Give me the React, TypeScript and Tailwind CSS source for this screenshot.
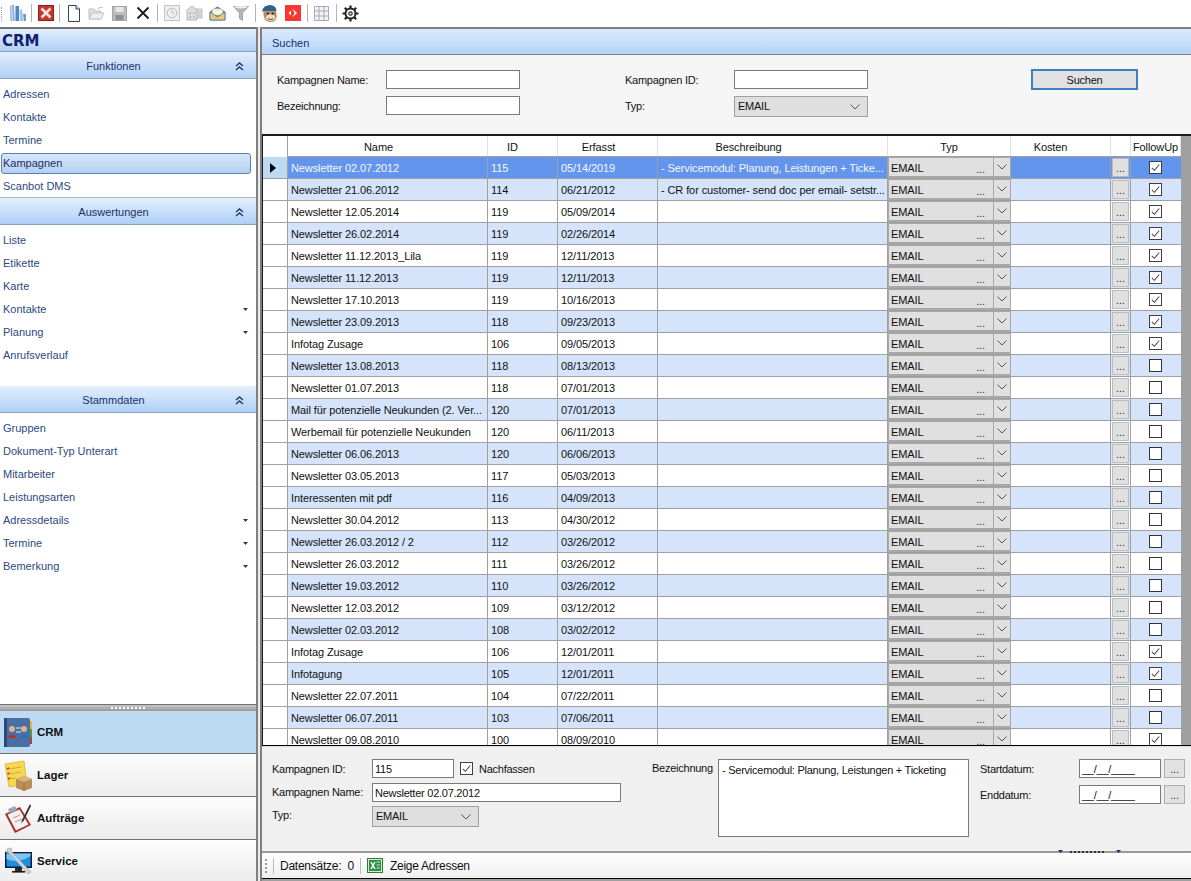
import type { ReactNode } from 'react'

const font = 'font-["Liberation_Sans",Arial,sans-serif]'

type Row = { name: string; id: number; date: string; desc?: string; check: boolean }

const rows: Row[] = [
  { name: 'Newsletter 02.07.2012', id: 115, date: '05/14/2019', desc: '- Servicemodul: Planung, Leistungen + Ticke...', check: true },
  { name: 'Newsletter 21.06.2012', id: 114, date: '06/21/2012', desc: '- CR for customer- send doc per email- setstr...', check: true },
  { name: 'Newsletter 12.05.2014', id: 119, date: '05/09/2014', check: true },
  { name: 'Newsletter 26.02.2014', id: 119, date: '02/26/2014', check: true },
  { name: 'Newsletter 11.12.2013_Lila', id: 119, date: '12/11/2013', check: true },
  { name: 'Newsletter 11.12.2013', id: 119, date: '12/11/2013', check: true },
  { name: 'Newsletter 17.10.2013', id: 119, date: '10/16/2013', check: true },
  { name: 'Newsletter 23.09.2013', id: 118, date: '09/23/2013', check: true },
  { name: 'Infotag Zusage', id: 106, date: '09/05/2013', check: true },
  { name: 'Newsletter 13.08.2013', id: 118, date: '08/13/2013', check: false },
  { name: 'Newsletter 01.07.2013', id: 118, date: '07/01/2013', check: false },
  { name: 'Mail für potenzielle Neukunden (2. Ver...', id: 120, date: '07/01/2013', check: false },
  { name: 'Werbemail für potenzielle Neukunden', id: 120, date: '06/11/2013', check: false },
  { name: 'Newsletter 06.06.2013', id: 120, date: '06/06/2013', check: false },
  { name: 'Newsletter 03.05.2013', id: 117, date: '05/03/2013', check: false },
  { name: 'Interessenten mit pdf', id: 116, date: '04/09/2013', check: false },
  { name: 'Newsletter 30.04.2012', id: 113, date: '04/30/2012', check: false },
  { name: 'Newsletter 26.03.2012 / 2', id: 112, date: '03/26/2012', check: false },
  { name: 'Newsletter 26.03.2012', id: 111, date: '03/26/2012', check: false },
  { name: 'Newsletter 19.03.2012', id: 110, date: '03/26/2012', check: false },
  { name: 'Newsletter 12.03.2012', id: 109, date: '03/12/2012', check: false },
  { name: 'Newsletter 02.03.2012', id: 108, date: '03/02/2012', check: false },
  { name: 'Infotag Zusage', id: 106, date: '12/01/2011', check: true },
  { name: 'Infotagung', id: 105, date: '12/01/2011', check: true },
  { name: 'Newsletter 22.07.2011', id: 104, date: '07/22/2011', check: false },
  { name: 'Newsletter 06.07.2011', id: 103, date: '07/06/2011', check: false },
  { name: 'Newsletter 09.08.2010', id: 100, date: '08/09/2010', check: true },
]

const Check = ({ size = 13 }: { size?: number }) => (
  <svg width={size} height={size} viewBox="0 0 14 14">
    <rect x="0.5" y="0.5" width="13" height="13" fill="#fff" stroke="#333" />
    <path d="M3 7.5 L5.8 10 L11 3.8" fill="none" stroke="#444" strokeWidth="1.1" />
  </svg>
)

const Empty = () => <span className="block w-[13px] h-[13px] bg-white border border-[#333]" />

const Chevron = () => (
  <svg width="10" height="6" viewBox="0 0 10 6">
    <path d="M0.5 0.5 L5 5 L9.5 0.5" fill="none" stroke="#555" strokeWidth="1" />
  </svg>
)

const DoubleUp = () => (
  <svg width="9" height="9" viewBox="0 0 9 9">
    <path d="M1 4 L4.5 1 L8 4 M1 8 L4.5 5 L8 8" fill="none" stroke="#1c3a70" strokeWidth="1.4" />
  </svg>
)

const Down = () => (
  <svg width="5" height="3" viewBox="0 0 5 3">
    <path d="M0 0 H5 L2.5 3 Z" fill="#1c3a70" />
  </svg>
)

const Sep = ({ narrow }: { narrow?: boolean }) => (
  <span className={`w-px h-[18px] bg-[#b4b4b4] ${narrow ? 'mx-[2px]' : 'mx-[2.5px]'}`} />
)

const Books = () => (
  <svg width="18" height="20" viewBox="0 0 18 20">
    <path d="M1 3 L5 1.5 L6 18 H1.5 Z" fill="#8fb6e0" />
    <path d="M2.5 3 L3.5 18" stroke="#cfe2f5" strokeWidth="1" />
    <path d="M6.5 3 H10 V18 H6.5 Z" fill="#4f86c6" />
    <path d="M10.5 7 L13 6 L14.5 18 H11 Z" fill="#a7c4e4" />
    <path d="M14 11 H17 V18 H15 Z" fill="#6f9ad0" />
  </svg>
)
const RedX = () => (
  <svg width="16" height="16" viewBox="0 0 16 16">
    <rect x="0.5" y="0.5" width="15" height="15" fill="#c4382c" stroke="#8f1f15" />
    <path d="M3.5 3.5 L12.5 12.5 M12.5 3.5 L3.5 12.5" stroke="#f4e3de" strokeWidth="2.6" />
  </svg>
)
const Doc = () => (
  <svg width="14" height="17" viewBox="0 0 14 17">
    <path d="M1.5 0.5 H9 L12.5 4 V16.5 H1.5 Z" fill="#fff" stroke="#2e4460" />
    <path d="M9 0.5 V4 H12.5" fill="#cfe0f2" stroke="#2e4460" />
  </svg>
)
const Folder = () => (
  <svg width="17" height="15" viewBox="0 0 17 15">
    <path d="M1 3 H6 L7 5 H13 V13 H1 Z" fill="#e0e0e0" stroke="#c2c2c2" />
    <path d="M1 13 L4 7 H16 L13 13 Z" fill="#efefef" stroke="#c2c2c2" />
    <path d="M10 3 Q12 0.5 15 2" fill="none" stroke="#c8c8c8" strokeWidth="1.3" />
  </svg>
)
const Save = () => (
  <svg width="15" height="15" viewBox="0 0 15 15">
    <rect x="0.5" y="0.5" width="14" height="14" fill="#bdbdbd" stroke="#a6a6a6" />
    <rect x="3.5" y="1" width="8" height="5" fill="#e8e8e8" />
    <rect x="3.5" y="9" width="8" height="5" fill="#8f8f8f" />
  </svg>
)
const BlackX = () => (
  <svg width="14" height="14" viewBox="0 0 14 14">
    <path d="M1.5 1.5 L12.5 12.5 M12.5 1.5 L1.5 12.5" stroke="#1a1a1a" strokeWidth="1.8" />
  </svg>
)
const Clock = () => (
  <svg width="16" height="16" viewBox="0 0 16 16">
    <rect x="0.5" y="0.5" width="15" height="15" fill="#efefef" stroke="#c4c4c4" />
    <circle cx="8" cy="8" r="4.8" fill="none" stroke="#bcbcbc" />
    <path d="M8 4.8 V8 H10.6" fill="none" stroke="#bcbcbc" />
  </svg>
)
const Ledger = () => (
  <svg width="17" height="16" viewBox="0 0 17 16">
    <path d="M9 4 H16 V13 H9 Z" fill="#d4d4d4" stroke="#c0c0c0" />
    <path d="M1 5 L6 1 L11 5 V15 H1 Z" fill="#dedede" stroke="#b8b8b8" />
    <path d="M3 8 L4 9 L5 7 M7 8 H9 M3 12 L4 13 L5 11 M7 12 H9" fill="none" stroke="#9a9a9a" strokeWidth="0.8" />
  </svg>
)
const Mail = () => (
  <svg width="17" height="15" viewBox="0 0 17 15">
    <path d="M1 6 L8.5 0.8 L16 6 V14 H1 Z" fill="#5d9fdc" stroke="#3f78b2" strokeWidth="0.8" />
    <path d="M3.5 3 H13.5 V9 H3.5 Z" fill="#fff6d8" stroke="#d8c68c" strokeWidth="0.6" />
    <path d="M1 6 L8.5 11 L16 6 V14 H1 Z" fill="#f1c66a" stroke="#3f78b2" strokeWidth="0.8" />
  </svg>
)
const Funnel = () => (
  <svg width="16" height="16" viewBox="0 0 16 16">
    <path d="M0.5 1.5 H15.5 L9.5 8 V15.5 L6.5 13.5 V8 Z" fill="#b6b6b6" stroke="#8c8c8c" strokeWidth="0.7" />
    <ellipse cx="8" cy="2.2" rx="6.6" ry="1.2" fill="#ececec" />
  </svg>
)
const Monkey = () => (
  <svg width="18" height="19" viewBox="0 0 17 18">
    <path d="M1 7 Q2 1 9 1 Q15 2 14.5 7 Z" fill="#2f6388" />
    <path d="M2.5 7 H14 Q16 12 13 16 Q9 18 5 16 Q1.5 12 2.5 7 Z" fill="#b98a5e" />
    <ellipse cx="9" cy="13" rx="4.5" ry="3.2" fill="#ecd9bd" />
    <circle cx="6.5" cy="9" r="1" fill="#221a14" />
    <circle cx="11" cy="9" r="1" fill="#221a14" />
    <path d="M6.5 14 Q9 15.5 11.5 14" fill="none" stroke="#3a2b20" strokeWidth="0.8" />
  </svg>
)
const RedSquare = () => (
  <svg width="16" height="16" viewBox="0 0 16 16">
    <rect width="16" height="16" fill="#f6382f" />
    <path d="M3.5 8 L6 5.5 L6 10.5 Z M7.5 3.8 L12 8 L7.5 12.2 L9.5 8 Z" fill="#fff" />
  </svg>
)
const GridIcon = () => (
  <svg width="15" height="15" viewBox="0 0 15 15">
    <path d="M0.5 0.5 H14.5 V14.5 H0.5 Z M5 0.5 V14.5 M10 0.5 V14.5 M0.5 5 H14.5 M0.5 10 H14.5" fill="#f4f4f8" stroke="#a9a9b4" />
  </svg>
)
const Gear = () => (
  <svg width="17" height="17" viewBox="0 0 17 17">
    <circle cx="8.5" cy="8.5" r="5" fill="none" stroke="#222" strokeWidth="2" />
    <circle cx="8.5" cy="8.5" r="1.7" fill="none" stroke="#222" strokeWidth="1.2" />
    <path d="M8.5 0.5 V3.5 M8.5 13.5 V16.5 M0.5 8.5 H3.5 M13.5 8.5 H16.5 M2.8 2.8 L5 5 M12 12 L14.2 14.2 M14.2 2.8 L12 5 M5 12 L2.8 14.2" stroke="#222" strokeWidth="2.2" />
  </svg>
)

const ToolIcon = ({ children }: { children: ReactNode }) => (
  <span className="w-[23px] h-[20px] flex items-center justify-center">{children}</span>
)

function Toolbar() {
  return (
    <div className="h-[27px] shrink-0 bg-white flex items-center pl-[6px] pb-[1px] relative">
      <span className="absolute left-[1px] top-[7px] h-[14px] w-px border-l border-dotted border-[#999]" />
      <ToolIcon><Books /></ToolIcon>
      <Sep narrow />
      <ToolIcon><RedX /></ToolIcon>
      <Sep narrow />
      <ToolIcon><Doc /></ToolIcon>
      <ToolIcon><Folder /></ToolIcon>
      <ToolIcon><Save /></ToolIcon>
      <ToolIcon><BlackX /></ToolIcon>
      <Sep />
      <ToolIcon><Clock /></ToolIcon>
      <ToolIcon><Ledger /></ToolIcon>
      <ToolIcon><Mail /></ToolIcon>
      <ToolIcon><Funnel /></ToolIcon>
      <Sep />
      <ToolIcon><Monkey /></ToolIcon>
      <ToolIcon><RedSquare /></ToolIcon>
      <Sep />
      <ToolIcon><GridIcon /></ToolIcon>
      <Sep />
      <ToolIcon><Gear /></ToolIcon>
    </div>
  )
}

const SectionHeader = ({ title }: { title: string }) => (
  <div className="h-[27px] shrink-0 pt-[2px] flex items-center bg-gradient-to-b from-[#e3effd] to-[#afd0f6] border-b border-[#8da0b8] text-[11px] text-[#1f2f6b]">
    <span className="w-[227px] text-center mr-[8px]">{title}</span>
    <DoubleUp />
  </div>
)

const NavItem = ({ label, active, more }: { label: string; active?: boolean; more?: boolean }) => (
  <div
    className={
      active
        ? 'h-[21px] ml-[1px] mr-[5px] my-[1px] pl-[1px] flex items-center rounded-[3px] border border-[#5a7fb8] bg-gradient-to-b from-[#d6e6fa] to-[#b6d0f0] text-[11px] text-[#1d2f68]'
        : 'h-[23px] pl-[3px] pr-[8px] flex items-center justify-between text-[11px] text-[#2b4a80]'
    }
  >
    <span>{label}</span>
    {more && <Down />}
  </div>
)

const BookIcon = () => (
  <svg width="28" height="31" viewBox="0 0 28 31">
    <rect x="0" y="1" width="26" height="29" rx="2" fill="#4a6fa5" />
    <rect x="0" y="1" width="3" height="29" fill="#2c4a78" />
    <rect x="26" y="4" width="2" height="8" fill="#e2b93b" />
    <rect x="26" y="12" width="2" height="8" fill="#4f9a4a" />
    <rect x="26" y="20" width="2" height="7" fill="#b0413a" />
    <circle cx="8" cy="12" r="3" fill="#e0b090" />
    <path d="M3 21 Q8 14 13 21 Z" fill="#b3322c" />
    <circle cx="20" cy="12" r="3" fill="#e0b090" />
    <path d="M15 21 Q20 14 25 21 Z" fill="#2f6fb5" />
    <path d="M12 11 H17 M12 15 H17" stroke="#dfe8f4" strokeWidth="1" />
  </svg>
)
const NotesIcon = () => (
  <svg width="28" height="31" viewBox="0 0 28 31">
    <path d="M1 4 L20 1 L23 24 L5 27 Z" fill="#f7d84f" stroke="#d6a92c" strokeWidth="0.7" />
    <path d="M5 9 L17 7 M5.5 14 L17 12 M6 19 L12 18" stroke="#c9a53c" strokeWidth="0.9" />
    <path d="M3 9 L5 8 M3.5 14 L5.5 13 M4 19 L6 18" stroke="#c8322a" strokeWidth="1.4" />
    <path d="M12 19 L20 16 L28 19 V28 L20 31 L12 28 Z" fill="#b88f55" />
    <path d="M12 19 L20 22 L28 19 L20 16 Z" fill="#d8b67e" />
    <path d="M20 22 V31" stroke="#8e6a37" strokeWidth="0.7" />
  </svg>
)
const ClipboardIcon = () => (
  <svg width="29" height="31" viewBox="0 0 29 31">
    <path d="M1 11 L16 4 L27 22 L11 30 Z" fill="#a62f2b" />
    <path d="M3.5 11.5 L15.5 6.5 L24.5 21.5 L12 27.5 Z" fill="#f1f1f1" />
    <path d="M4 6 L11 3 L13 7 L6 10 Z" fill="#9aa8b5" />
    <path d="M9 15 L16 12 M11 19 L18 16" stroke="#d77a76" strokeWidth="0.9" />
    <path d="M26 1 L18 17 L17 20 L19.5 18 L27 3 Z" fill="#33302e" />
  </svg>
)
const MonitorIcon = () => (
  <svg width="30" height="28" viewBox="0 0 30 28">
    <rect x="1" y="5" width="27" height="16" fill="#0a1e3c" />
    <path d="M2.5 6.5 H26.5 V19.5 H2.5 Z" fill="#1e8fe0" />
    <path d="M2.5 12 Q14 17 26.5 9 V6.5 H2.5 Z" fill="#7cc6f3" />
    <rect x="11" y="21" width="7" height="3" fill="#2a2a2a" />
    <rect x="8" y="24" width="13" height="1.6" fill="#1a1a1a" />
    <path d="M3 2 Q6 0 8 2 L7 4 L27 25 L24 27 L5 6 Q2 6 1 4 L3.5 4.5 Z" fill="#cfd3d6" stroke="#8a8f94" strokeWidth="0.5" />
  </svg>
)

const ModuleButton = ({ label, icon, active }: { label: string; icon: ReactNode; active?: boolean }) => (
  <div
    className={`h-[43px] shrink-0 flex items-center pl-[4px] border-b border-[#707070] text-[11.5px] font-bold text-[#101010] ${
      active ? 'bg-[#bddaf3]' : 'bg-gradient-to-b from-[#fdfdfd] to-[#ececec]'
    }`}
  >
    <span className="w-[33px] flex justify-start">{icon}</span>
    <span className="pt-[2px]">{label}</span>
  </div>
)

function Sidebar() {
  return (
    <div className="w-[258px] shrink-0 flex flex-col border-r-2 border-[#808080] bg-white overflow-hidden">
      <div className="h-[25px] shrink-0 pt-[2px] flex items-center pl-[2px] border-t-2 border-[#707070] border-b border-b-[#8da0b8] bg-gradient-to-b from-[#e3effd] to-[#afd0f6] text-[15px] font-bold text-[#10206e] font-['DejaVu_Sans',sans-serif]">
        CRM
      </div>
      <SectionHeader title="Funktionen" />
      <div className="h-[119px] pt-[4px] shrink-0 border-b border-[#b0b8c4]">
        <NavItem label="Adressen" />
        <NavItem label="Kontakte" />
        <NavItem label="Termine" />
        <NavItem label="Kampagnen" active />
        <NavItem label="Scanbot DMS" />
      </div>
      <SectionHeader title="Auswertungen" />
      <div className="h-[161px] pt-[4px] shrink-0">
        <NavItem label="Liste" />
        <NavItem label="Etikette" />
        <NavItem label="Karte" />
        <NavItem label="Kontakte" more />
        <NavItem label="Planung" more />
        <NavItem label="Anrufsverlauf" />
      </div>
      <SectionHeader title="Stammdaten" />
      <div className="h-[291px] shrink-0 pt-[4px]">
        <NavItem label="Gruppen" />
        <NavItem label="Dokument-Typ Unterart" />
        <NavItem label="Mitarbeiter" />
        <NavItem label="Leistungsarten" />
        <NavItem label="Adressdetails" more />
        <NavItem label="Termine" more />
        <NavItem label="Bemerkung" more />
      </div>
      <div className="h-[7px] shrink-0 border-t border-[#707070] bg-gradient-to-b from-[#c8c8c8] to-[#9a9a9a] flex items-center justify-center">
        <span className="w-[34px] h-[2px] border-t-2 border-dotted border-white" />
      </div>
      <ModuleButton label="CRM" icon={<BookIcon />} active />
      <ModuleButton label="Lager" icon={<NotesIcon />} />
      <ModuleButton label="Aufträge" icon={<ClipboardIcon />} />
      <ModuleButton label="Service" icon={<MonitorIcon />} />
    </div>
  )
}

const Label = ({ children, className = '' }: { children: ReactNode; className?: string }) => (
  <span className={`pt-[2px] ${className}`}>{children}</span>
)

const TextBox = ({ className = '', children }: { className?: string; children?: ReactNode }) => (
  <div className={`h-[19px] bg-white border border-[#7a7a7a] pl-[2px] pt-[1px] flex items-center text-[#111] whitespace-pre ${className}`}>
    {children}
  </div>
)

const SelectBox = ({ className = '' }: { className?: string }) => (
  <div className={`h-[21px] bg-[#dfdfdf] border border-[#a0a0a0] pl-[3px] pr-[7px] flex items-center justify-between text-[#111] ${className}`}>
    <span>EMAIL</span>
    <Chevron />
  </div>
)

function SearchPanel() {
  return (
    <div className="h-[105px] shrink-0 flex flex-col bg-[#f5f5f5]">
      <div className="h-[26px] shrink-0 pt-[4px] flex items-center pl-[10px] bg-gradient-to-b from-[#dbeafd] to-[#b5d4f8] border-b border-[#808080] text-[11px] text-[#1a2a78]">
        Suchen
      </div>
      <div className="pt-[15px] pl-[15px] grid grid-cols-[109px_134px_105px_109px_134px_163px_107px] grid-rows-[19px_19px] gap-y-[7px] items-center text-[11px] tracking-[-0.25px] text-[#111]">
        <Label>Kampagnen Name:</Label>
        <TextBox />
        <span />
        <Label>Kampagnen ID:</Label>
        <TextBox />
        <span />
        <div className="h-[21px] pt-[1px] bg-[#e1e1e1] border-2 border-[#3f7fc0] flex items-center justify-center">Suchen</div>
        <Label>Bezeichnung:</Label>
        <TextBox />
        <span />
        <Label>Typ:</Label>
        <SelectBox className="mt-[2px]" />
      </div>
    </div>
  )
}

const headCell = 'shrink-0 h-full pt-[2px] flex items-center justify-center border-r border-[#e2e2e2]'
const cell = 'shrink-0 h-full pt-[2px] flex items-center pl-[3px] border-r border-[#a0a0a0] whitespace-nowrap overflow-hidden'

function GridRow({ row, index }: { row: Row; index: number }) {
  const selected = index === 0
  const bg = selected ? 'bg-[#6495ed] text-[#f4f8ff]' : index % 2 === 1 ? 'bg-[#d5e4fb] text-[#111]' : 'bg-white text-[#111]'
  return (
    <div className="h-[22px] shrink-0 flex text-[11px] tracking-[-0.1px]">
      <div className={`w-[25px] shrink-0 flex items-center pl-[7px] border-r border-b border-[#a0a0a0] ${selected ? 'bg-[#bddaf3]' : 'bg-white'}`}>
        {selected && (
          <svg width="6" height="10" viewBox="0 0 6 10">
            <path d="M0 0 L6 5 L0 10 Z" fill="#000" />
          </svg>
        )}
      </div>
      <div className={`flex flex-1 border-b border-[#a0a0a0] ${bg}`}>
        <div className={`${cell} w-[200px]`}>{row.name}</div>
        <div className={`${cell} w-[70px]`}>{row.id}</div>
        <div className={`${cell} w-[100px]`}>{row.date}</div>
        <div className={`${cell} w-[230px]`}>{row.desc}</div>
        <div className="w-[123px] shrink-0 h-full flex border-x border-b-2 border-t border-[#a8a8a8] bg-[#e0e0e0] text-[#111]">
          <span className="flex-1 flex items-center justify-between pl-[2px] pr-[8px] pt-[2px]">
            EMAIL<span className="text-[11px] text-[#333] pt-[2px]">...</span>
          </span>
          <span className="w-[17px] flex items-center justify-center border-l border-[#a8a8a8]">
            <Chevron />
          </span>
        </div>
        <div className="w-[100px] shrink-0 h-full border-r border-[#a0a0a0]" />
        <div className="w-[20px] shrink-0 h-full border-r border-[#a0a0a0] p-[1px]">
          <div className="h-full bg-[#e0e0e0] border border-[#bcbcbc] flex items-end justify-center text-[11px] text-[#333] leading-[16px]">...</div>
        </div>
        <div className="w-[50px] shrink-0 h-full pr-[2px] flex items-center justify-center">
          {row.check ? <Check /> : <Empty />}
        </div>
      </div>
    </div>
  )
}

function DataGrid() {
  return (
    <div className="flex-1 min-h-0 flex flex-col overflow-hidden border-t-2 border-b border-l border-[#1a1a1a] border-b-black bg-[#a0a0a0] text-[11px] tracking-[-0.1px]">
      <div className="h-[21px] shrink-0 flex text-[#111]">
        <div className="w-[25px] shrink-0 bg-white border-r border-[#a0a0a0]" />
        <div className="flex bg-white border-b border-[#a0a0a0]">
          <div className={`${headCell} w-[200px] pr-[18px]`}>Name</div>
          <div className={`${headCell} w-[70px] pr-[20px]`}>ID</div>
          <div className={`${headCell} w-[100px] pr-[18px]`}>Erfasst</div>
          <div className={`${headCell} w-[230px] pr-[48px]`}>Beschreibung</div>
          <div className={`${headCell} w-[123px]`}>Typ</div>
          <div className={`${headCell} w-[100px] pr-[20px]`}>Kosten</div>
          <div className={`${headCell} w-[20px]`} />
          <div className={`${headCell} w-[50px]`}>FollowUp</div>
        </div>
      </div>
      <div className="w-[918px] flex flex-col">
        {rows.map((row, i) => (
          <GridRow key={i} row={row} index={i} />
        ))}
      </div>
    </div>
  )
}

const SmallButton = () => (
  <div className="w-[21px] h-[19px] bg-[#e1e1e1] border border-[#adadad] flex items-end justify-center text-[11px] text-[#333] leading-[15px]">...</div>
)

function DetailPanel() {
  return (
    <div className="h-[105px] shrink-0 flex bg-[#f0f0f0] border-t border-[#dcdcdc] pt-[12px] pl-[10px] text-[11px] tracking-[-0.25px] text-[#111] relative">
      <div className="w-[380px] shrink-0 flex flex-col">
        <div className="flex items-center h-[19px]">
          <Label className="w-[100px]">Kampagnen ID:</Label>
          <TextBox className="w-[82px]">115</TextBox>
          <span className="ml-[6px] mr-[6px]"><Check /></span>
          <Label>Nachfassen</Label>
        </div>
        <div className="flex items-center h-[19px] mt-[5px]">
          <span className="w-[100px]">Kampagnen Name:</span>
          <TextBox className="w-[249px]">Newsletter 02.07.2012</TextBox>
        </div>
        <div className="flex items-start h-[21px] mt-[4px]">
          <span className="w-[100px] pt-[1px]">Typ:</span>
          <SelectBox className="w-[107px]" />
        </div>
      </div>
      <span className="w-[66px] shrink-0 pt-[1px]">Bezeichnung</span>
      <div className="w-[251px] h-[78px] shrink-0 bg-white border border-[#7a7a7a] pl-[3px] pt-[2px]">- Servicemodul: Planung, Leistungen + Ticketing</div>
      <div className="ml-[11px] flex flex-col gap-[7px]">
        <div className="flex items-center h-[19px]">
          <Label className="w-[99px]">Startdatum:</Label>
          <TextBox className="w-[82px]">{'__/__/____'}</TextBox>
          <span className="ml-[3px]"><SmallButton /></span>
        </div>
        <div className="flex items-center h-[19px]">
          <Label className="w-[99px]">Enddatum:</Label>
          <TextBox className="w-[82px]">{'__/__/____'}</TextBox>
          <span className="ml-[3px]"><SmallButton /></span>
        </div>
      </div>
    </div>
  )
}

function StatusBar() {
  return (
    <div className="h-[28px] shrink-0 flex items-center pl-[3px] bg-gradient-to-b from-white to-[#f0f0f0] border-t-2 border-[#9a9a9a] border-b border-b-black text-[12px] tracking-[-0.25px] text-[#111] relative">
      <span className="absolute left-[796px] -top-[3px] flex items-center">
        <Down />
        <span className="w-[34px] ml-[7px] mr-[12px] border-t-2 border-dotted border-[#333]" />
        <Down />
      </span>
      <span className="h-[14px] border-l-2 border-dotted border-[#999]" />
      <span className="w-px h-[16px] bg-[#bbb] mx-[6px]" />
      <span>Datensätze:&nbsp;&nbsp;0</span>
      <span className="w-px h-[16px] bg-[#bbb] mx-[6px]" />
      <svg width="16" height="15" viewBox="0 0 16 15">
        <rect x="0.5" y="0.5" width="15" height="14" fill="#d9ead3" stroke="#2f7a3a" />
        <rect x="2" y="2" width="12" height="11" fill="#2f8f45" />
        <path d="M4 4 L8 11 M8 4 L4 11" stroke="#fff" strokeWidth="1.5" />
        <path d="M9.5 4 H13 M9.5 7 H13 M9.5 10 H13" stroke="#cfe8d4" strokeWidth="1" />
      </svg>
      <span className="ml-[7px]">Zeige Adressen</span>
    </div>
  )
}

export default function App() {
  return (
    <div className={`w-[1191px] h-[881px] flex flex-col overflow-hidden bg-white ${font}`}>
      <Toolbar />
      <div className="flex-1 min-h-0 flex bg-[#ececec]">
        <Sidebar />
        <div className="flex-1 min-w-0 ml-[2px] flex flex-col border-l-2 border-t-2 border-[#808080] bg-[#a0a0a0]">
          <SearchPanel />
          <DataGrid />
          <DetailPanel />
          <StatusBar />
          <div className="h-[2px] shrink-0 bg-[#a0a0a0]" />
        </div>
      </div>
    </div>
  )
}
